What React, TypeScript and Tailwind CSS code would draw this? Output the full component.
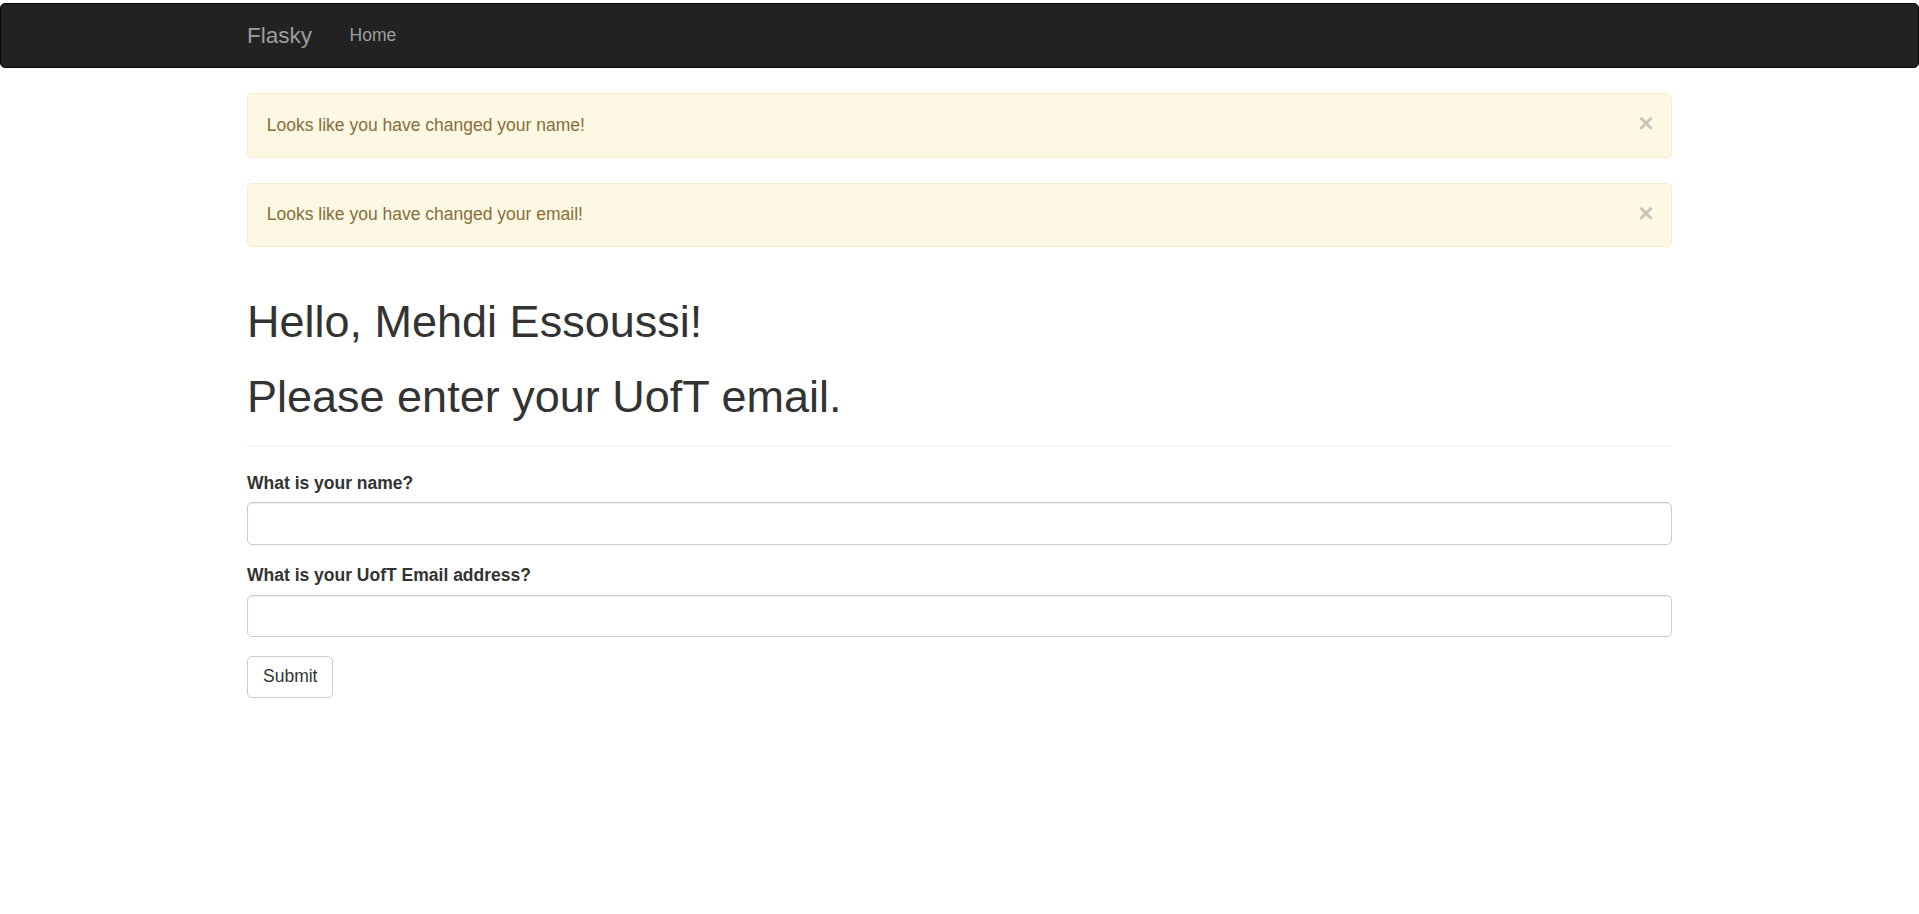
import { useState } from 'react';

const messages = ['Looks like you have changed your name!', 'Looks like you have changed your email!'];

function Alert({ text, onClose }: { text: string; onClose: () => void }) {
  return (
    <div className="relative mb-[25px] rounded-[5px] border border-[#faebcc] bg-[#fcf8e3] py-[18.75px] pl-[18.75px] pr-[43.75px] text-[#8a6d3b]">
      <button
        type="button"
        onClick={onClose}
        className="relative -top-[2.5px] -right-[26.25px] float-right text-[26.25px] font-bold leading-none text-black opacity-20"
      >
        ×
      </button>
      {text}
    </div>
  );
}

export default function App() {
  const [alerts, setAlerts] = useState(messages);
  const [name, setName] = useState('');
  const [email, setEmail] = useState('');

  return (
    <div className="min-h-screen bg-white pt-[3px] font-['Liberation_Sans',Arial,sans-serif] text-[17.5px] leading-[25px] text-[#333]">
      <nav className="mb-[25px] h-[65px] rounded-[5px] border border-[#080808] bg-[#222]">
        <div className="mx-auto flex w-[1462.5px] px-[18.75px]">
          <a href="#" className="-ml-[18.75px] px-[18.75px] py-[18.75px] text-[22.5px] leading-[25px] text-[#9d9d9d]">
            Flasky
          </a>
          <a href="#" className="px-[18.75px] py-[18.75px] text-[17.5px] leading-[25px] text-[#9d9d9d]">
            Home
          </a>
        </div>
      </nav>

      <div className="mx-auto w-[1462.5px] px-[18.75px]">
        {alerts.map((m) => (
          <Alert key={m} text={m} onClose={() => setAlerts(alerts.filter((a) => a !== m))} />
        ))}

        <div className="mb-[25px] mt-[50px] border-b border-[#eee] pb-[11.25px]">
          <h1 className="text-[45px] font-normal leading-[1.1]">Hello, Mehdi Essoussi!</h1>
          <h1 className="mb-[12.5px] mt-[25px] text-[45px] font-normal leading-[1.1]">Please enter your UofT email.</h1>
        </div>

        <form onSubmit={(e) => e.preventDefault()}>
          <div className="mb-[18.75px]">
            <label className="mb-[6.25px] inline-block font-bold">What is your name?</label>
            <input
              value={name}
              onChange={(e) => setName(e.target.value)}
              className="block h-[42.5px] w-full rounded-[5px] border border-[#ccc] px-[15px] shadow-[inset_0_1px_1px_rgba(0,0,0,0.075)] outline-none"
            />
          </div>
          <div className="mb-[18.75px]">
            <label className="mb-[6.25px] inline-block font-bold">What is your UofT Email address?</label>
            <input
              value={email}
              onChange={(e) => setEmail(e.target.value)}
              className="block h-[42.5px] w-full rounded-[5px] border border-[#ccc] px-[15px] shadow-[inset_0_1px_1px_rgba(0,0,0,0.075)] outline-none"
            />
          </div>
          <button
            type="submit"
            className="rounded-[5px] border border-[#ccc] bg-white px-[15px] py-[7.5px] text-[17.5px] leading-[25px] text-[#333]"
          >
            Submit
          </button>
        </form>
      </div>
    </div>
  );
}
